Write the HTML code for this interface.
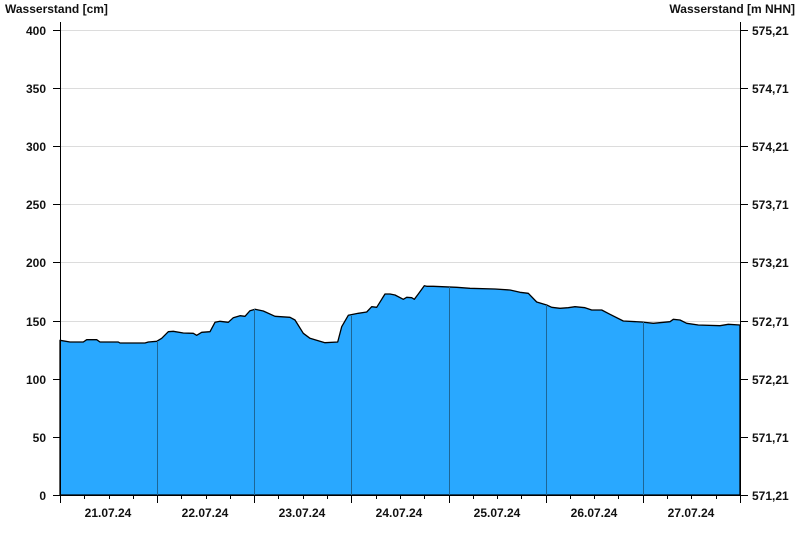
<!DOCTYPE html>
<html><head><meta charset="utf-8"><style>
body{margin:0;background:#fff;width:800px;height:550px;overflow:hidden}
svg text{font-family:"Liberation Sans",Arial,sans-serif;font-weight:bold;font-size:12px;fill:#111}
</style></head><body>
<svg width="800" height="550" viewBox="0 0 800 550">
<g stroke="#dcdcdc" stroke-width="1">
<line x1="61" x2="740" y1="30.5" y2="30.5"/><line x1="61" x2="740" y1="88.5" y2="88.5"/>
<line x1="61" x2="740" y1="146.5" y2="146.5"/><line x1="61" x2="740" y1="204.5" y2="204.5"/>
<line x1="61" x2="740" y1="262.5" y2="262.5"/><line x1="61" x2="740" y1="321.5" y2="321.5"/>
<line x1="61" x2="740" y1="379.5" y2="379.5"/><line x1="61" x2="740" y1="437.5" y2="437.5"/>
</g>
<path fill="#29a8ff" stroke="#000" stroke-width="1.3" stroke-linejoin="round" d="M60,340.3 L70,342 83.3,342 86.7,339.7 96.7,339.7 100,342 118.3,342 120,343 145,343 148.3,342 156.7,341.3 161.7,338.3 168.3,331.7 173.3,331.3 183.3,333 193.3,333.3 196.7,335.3 201.7,332.3 210,331.7 215,322.3 220,321.3 228.3,322.3 233.3,317.7 240,315.7 245,316.3 250,310.7 255,309.3 263.3,311 275,316.3 290,317.3 295,320 303.3,333.3 310,338.3 318.3,340.7 325,342.7 337.7,342 341.7,326.7 348.3,315.3 358.3,313.3 366.7,312 371.7,306.7 376.7,307.3 385,294 390,294 395,295 403.3,299.3 406.7,297.3 411.7,297.7 414.3,299.3 418.3,294 424.3,285.7 426.7,286.3 433.3,286.3 456.7,287.3 470,288.3 495,289 510,290 520,292.3 528.3,293.3 536.7,302 546.7,305 551.7,307.3 560,308.3 568.3,307.7 575,306.7 585,307.7 591.7,310 601.7,310 610,314.3 623.3,321 641.7,322 653.3,323.3 670,321.7 673.3,319.3 680,320 686.7,323.3 698.3,325 720,325.7 728.3,324.3 740,325 L740,495 L60,495 Z"/>
<g stroke="#1d6696" stroke-width="1">
<line x1="157.5" x2="157.5" y1="341" y2="495"/><line x1="254.5" x2="254.5" y1="309" y2="495"/>
<line x1="351.5" x2="351.5" y1="316" y2="495"/><line x1="449.5" x2="449.5" y1="287" y2="495"/>
<line x1="546.5" x2="546.5" y1="305" y2="495"/><line x1="643.5" x2="643.5" y1="322" y2="495"/>
</g>
<g stroke="#000" stroke-width="1">
<line x1="60.5" x2="60.5" y1="22" y2="503"/><line x1="740.5" x2="740.5" y1="22" y2="503"/>
<line x1="53" x2="740" y1="495.5" y2="495.5"/>
<path d="M53 30.5h7M53 88.5h7M53 146.5h7M53 204.5h7M53 262.5h7M53 321.5h7M53 379.5h7M53 437.5h7"/>
<path d="M741 30.5h7M741 88.5h7M741 146.5h7M741 204.5h7M741 262.5h7M741 321.5h7M741 379.5h7M741 437.5h7M741 495.5h7"/>
<path d="M157.5 495v8M254.5 495v8M351.5 495v8M449.5 495v8M546.5 495v8M643.5 495v8"/>
<path d="M84.5 495v4M109.5 495v4M133.5 495v4M181.5 495v4M206.5 495v4M230.5 495v4M278.5 495v4M303.5 495v4M327.5 495v4M376.5 495v4M400.5 495v4M424.5 495v4M473.5 495v4M497.5 495v4M521.5 495v4M570.5 495v4M594.5 495v4M618.5 495v4M667.5 495v4M691.5 495v4M716.5 495v4"/>
</g>
<text x="5" y="13">Wasserstand [cm]</text>
<text x="795" y="13" text-anchor="end">Wasserstand [m NHN]</text>
<g text-anchor="end">
<text x="46" y="35">400</text><text x="46" y="93">350</text><text x="46" y="151">300</text><text x="46" y="209">250</text>
<text x="46" y="267">200</text><text x="46" y="326">150</text><text x="46" y="384">100</text><text x="46" y="442">50</text><text x="46" y="500">0</text>
</g>
<g>
<text x="752" y="35">575,21</text><text x="752" y="93">574,71</text><text x="752" y="151">574,21</text><text x="752" y="209">573,71</text>
<text x="752" y="267">573,21</text><text x="752" y="326">572,71</text><text x="752" y="384">572,21</text><text x="752" y="442">571,71</text><text x="752" y="500">571,21</text>
</g>
<g text-anchor="middle">
<text x="108" y="517">21.07.24</text><text x="205" y="517">22.07.24</text><text x="302" y="517">23.07.24</text>
<text x="399" y="517">24.07.24</text><text x="497" y="517">25.07.24</text><text x="594" y="517">26.07.24</text><text x="691" y="517">27.07.24</text>
</g>
</svg>
</body></html>
